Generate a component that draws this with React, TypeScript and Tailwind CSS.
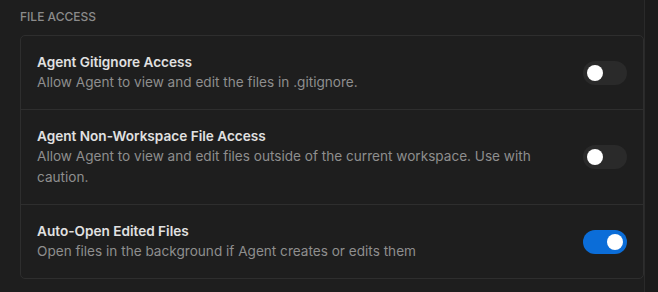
import { useState } from "react";

type Setting = {
  id: string;
  title: string;
  description: string;
  enabled: boolean;
};

const initialSettings: Setting[] = [
  {
    id: "gitignore",
    title: "Agent Gitignore Access",
    description: "Allow Agent to view and edit the files in .gitignore.",
    enabled: false,
  },
  {
    id: "non-workspace",
    title: "Agent Non-Workspace File Access",
    description:
      "Allow Agent to view and edit files outside of the current workspace. Use with caution.",
    enabled: false,
  },
  {
    id: "auto-open",
    title: "Auto-Open Edited Files",
    description: "Open files in the background if Agent creates or edits them",
    enabled: true,
  },
];

function Toggle({ on, onChange }: { on: boolean; onChange: () => void }) {
  return (
    <button
      role="switch"
      aria-checked={on}
      onClick={onChange}
      className={`flex h-6 w-11 shrink-0 items-center rounded-full px-1 transition-colors ${
        on ? "justify-end bg-[#0b6dd8]" : "justify-start bg-[#2a2a2a]"
      }`}
    >
      <span className="h-4 w-4 rounded-full bg-white" />
    </button>
  );
}

export default function App() {
  const [settings, setSettings] = useState(initialSettings);

  const toggle = (id: string) => {
    setSettings((s) =>
      s.map((item) => (item.id === id ? { ...item, enabled: !item.enabled } : item))
    );
  };

  return (
    <div
      className="flex h-[292px] w-[658px] bg-[#1e1e1e] antialiased"
      style={{ fontFamily: "Inter, 'Noto Sans', sans-serif" }}
    >
      <div className="w-[644px] pl-5">
        <h2 className="pt-[9px] text-[12px] font-medium leading-[15px] text-[#8b8b8b]">
          FILE ACCESS
        </h2>

        <div className="mt-[11px] rounded-[5px] border border-[#2e2e2e]">
          {settings.map((item, i) => (
            <div
              key={item.id}
              className={`flex items-center gap-6 px-4 py-4 ${
                i > 0 ? "border-t border-[#2e2e2e]" : ""
              }`}
            >
              <div className="flex-1">
                <div className="text-[13.6px] font-semibold leading-5 text-[#e1e1e1]">
                  {item.title}
                </div>
                <div className="text-[13.6px] leading-[21px] text-[#8e8e8e]">
                  {item.description}
                </div>
              </div>
              <Toggle on={item.enabled} onChange={() => toggle(item.id)} />
            </div>
          ))}
        </div>
      </div>
      <div className="flex-1 border-l border-[#2a2a2a] bg-[#1b1b1b]" />
    </div>
  );
}
